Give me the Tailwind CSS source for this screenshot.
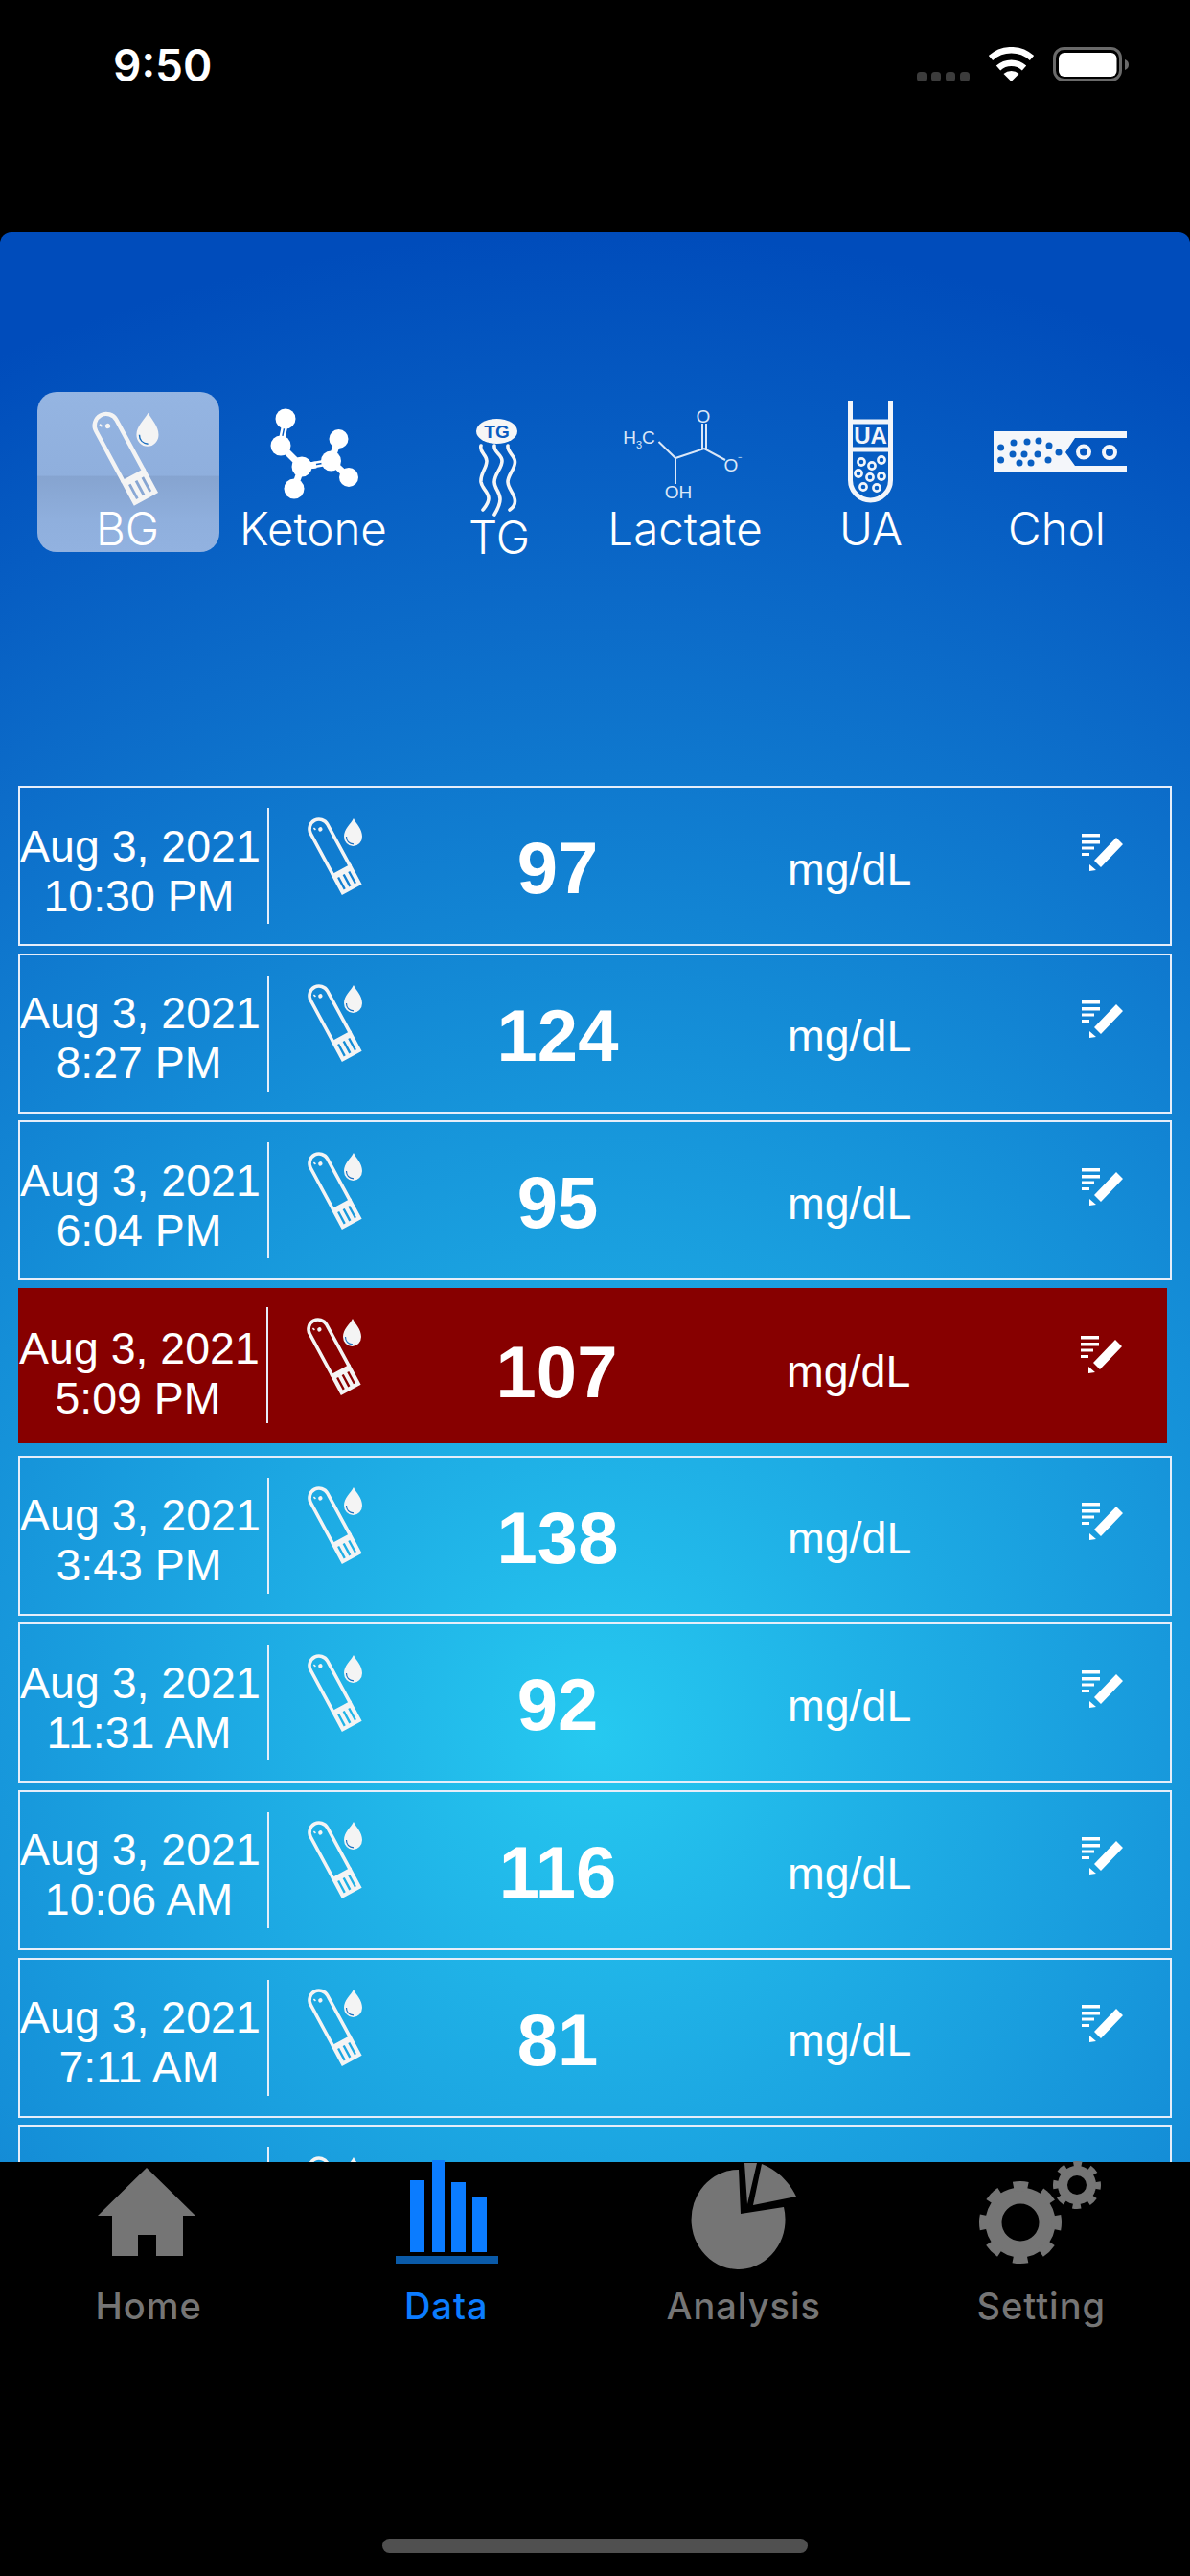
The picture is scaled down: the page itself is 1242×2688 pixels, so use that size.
<!DOCTYPE html>
<html lang="en">
<head>
    <meta charset="UTF-8">
    <meta name="viewport" content="width=device-width, initial-scale=1.0">
    <title>Data</title>
    <script src="https://cdn.jsdelivr.net/npm/@tailwindcss/browser@4"></script>
</head>
<body class="bg-black">
    <svg width="0" height="0" class="absolute">
        <defs>
            <!-- test strip with drop, used in the rows and in the BG tab -->
            <symbol id="strip" viewBox="0 0 60 84">
                <g transform="translate(13 14) rotate(-28.4)">
                    <path d="M-10 50V0A10 10 0 0 1 10 0V50" fill="none" stroke="#f4f4f4" stroke-width="3.6"/>
                    <path fill-rule="evenodd" fill="#f4f4f4" d="M-11.8 48H11.8V72H-11.8ZM-7.5 54V68H-5.2V54ZM-1.2 54V68H1.2V54ZM5.2 54V68H7.5V54Z"/>
                    <circle cx="1" cy="1" r="2.2" fill="#f4f4f4"/>
                    <path d="M-4.5 -3.5L-3.5 -1" stroke="#f4f4f4" stroke-width="1.6"/>
                </g>
                <path d="M49 3C52 9 58 14 58 22A9.5 10 0 0 1 39 22C39 14 46 9 49 3Z" fill="#f4f4f4"/>
                <path d="M41.5 22C41.5 26.500 44.500 29.500 49 29.800" fill="none" stroke="#1a6fc0" stroke-width="1.2"/>
            </symbol>
            <symbol id="edit" viewBox="1129 870 44 40">
                <path fill="#fff" d="M1129 870H1148V873.500H1129ZM1129 877H1148V880.500H1129ZM1129 883.500H1142V886.500H1129ZM1129 890H1137V893H1129Z"/>
                <path fill="#fff" d="M1165 874L1172 881L1149 905L1142 898ZM1137 902L1137 909L1144 908Z"/>
            </symbol>
        </defs>
    </svg>

    <div class="relative w-[1242px] h-[2688px] overflow-hidden bg-black font-[family-name:'Liberation_Sans'] text-white">
        <!-- status bar -->
        <header class="flex justify-between items-start h-[242px] pl-[118px] pr-[64px]">
            <span class="mt-[39px] text-[46px] leading-[58px] font-semibold font-[family-name:Inter]">9:50</span>
            <svg class="mt-[49px]" width="221" height="36" viewBox="957 49 221 36">
                <g fill="#3c3c3c">
                    <rect x="957" y="75" width="10" height="10" rx="3.500"/>
                    <rect x="972" y="75" width="10" height="10" rx="3.500"/>
                    <rect x="987" y="75" width="10" height="10" rx="3.500"/>
                    <rect x="1002" y="75" width="10" height="10" rx="3.500"/>
                </g>
                <path d="M1034 60.500A32 32 0 0 1 1077 60.500M1042 71A20 20 0 0 1 1069 71" fill="none" stroke="#fff" stroke-width="6.500"/>
                <path d="M1055.500 85L1047.500 77A12 12 0 0 1 1063.500 77Z" fill="#fff"/>
                <rect x="1100.500" y="50.500" width="69" height="33" rx="10" fill="none" stroke="#6a6a6a" stroke-width="3"/>
                <rect x="1105" y="55" width="60.500" height="25" rx="6" fill="#fff"/>
                <path d="M1174 62C1177 63 1178 65 1178 67.500C1178 70 1177 72 1174 73Z" fill="#6a6a6a"/>
            </svg>
        </header>

        <!-- blue panel -->
        <main class="h-[2014px] overflow-hidden rounded-t-[12px] bg-[radial-gradient(circle_at_621px_1568px,#26c9f0_0px,#1fb0e6_300px,#1590d8_715px,#0c6cc9_1157px,#004cbb_1568px)]">
            <!-- test type selector -->
            <nav class="grid grid-cols-[repeat(6,194px)] pl-[36px] pt-[167px] h-[578px]">
                <div class="relative flex flex-col items-center h-[167px] mt-[0px]">
                    <div class="absolute top-0 left-[3px] w-[190px] h-[167px] rounded-[20px] bg-[linear-gradient(#95b5e2,#8fafdd_52%,#86a4d0_53%,#8fafdd_80%,#92b2e0)]"></div>
                    <svg class="relative mt-[18px] ml-[-4px]" width="73" height="102"><use href="#strip"/></svg>
                    <span class="absolute top-[115px] text-[47.5px] leading-[56px] font-[family-name:Inter] font-light">BG</span>
                </div>
                <div class="relative flex flex-col items-center">
                    <svg class="overflow-visible mt-[6px]" width="194" height="125" viewBox="0 -5 194 125">
                        <g stroke="#fff" fill="none">
                            <path d="M66 20L61 44M70 20L65 44M114 60L86 65M115 64L87 69" stroke-width="2.500"/>
                            <path d="M63 45L85 67L77 90M85 67L100 65M115.500 61L123.500 38M115.500 61L134 78" stroke-width="7"/>
                        </g>
                        <g fill="#fff">
                            <circle cx="68" cy="17" r="10.500"/><circle cx="63" cy="45" r="10.500"/>
                            <circle cx="85" cy="67" r="10.500"/><circle cx="77" cy="90" r="10.500"/>
                            <circle cx="115.500" cy="61" r="10.500"/><circle cx="123.500" cy="38" r="10"/>
                            <circle cx="134" cy="78" r="10"/>
                        </g>
                    </svg>
                    <span class="absolute top-[115px] text-[47.5px] leading-[56px] font-[family-name:Inter] font-light">Ketone</span>
                </div>
                <div class="relative flex flex-col items-center">
                    <svg class="overflow-visible mt-[6px]" width="194" height="125" viewBox="0 -5 194 125">
                        <ellipse cx="94.500" cy="30" rx="21.500" ry="13" fill="#f6f6f6"/>
                        <text x="94.500" y="37" text-anchor="middle" font-size="19" font-weight="700" fill="#0a5cc0" font-family="Liberation Sans">TG</text>
                        <g fill="none" stroke="#f6f6f6" stroke-width="3.600" stroke-linecap="round">
                            <path d="M78 45C76 52 84 54 84 61C84 69 77 74 78 83C79 90 86 93 86 100C86 105 83 108 80 112"/>
                            <path d="M92 45C91 52 100 54 100 61C100 69 92 74 92 83C92 90 98 93 98 101C98 107 95 112 92 117"/>
                            <path d="M106 45C105 52 113.500 55 113.500 62C113.500 70 106 75 106 83C106 90 113.500 95 113.500 103C113.500 107 111 110 108 112"/>
                        </g>
                    </svg>
                    <span class="absolute top-[124px] text-[47.5px] leading-[56px] font-[family-name:Inter] font-light">TG</span>
                </div>
                <div class="relative flex flex-col items-center">
                    <svg class="overflow-visible mt-[6px]" width="194" height="125" viewBox="0 -5 194 125">
                        <path d="M69.500 41L87 58L117 48L139 60M87 58V85M115 48V22M119 48V22" fill="none" stroke="#dbe7f7" stroke-width="2"/>
                        <g fill="#dbe7f7" font-family="Liberation Sans" font-size="19" text-anchor="middle">
                            <text x="49" y="43">H<tspan font-size="11" dy="5">3</tspan><tspan dy="-5">C</tspan></text>
                            <text x="116" y="21">O</text>
                            <text x="147" y="72">O<tspan font-size="13" dy="-7">⁻</tspan></text>
                            <text x="90" y="100">OH</text>
                        </g>
                    </svg>
                    <span class="absolute top-[115px] text-[47.5px] leading-[56px] font-[family-name:Inter] font-light">Lactate</span>
                </div>
                <div class="relative flex flex-col items-center">
                    <svg class="overflow-visible mt-[6px]" width="194" height="125" viewBox="0 -5 194 125">
                        <path d="M75.500 -2V81A21 21 0 0 0 117.500 81V-2" fill="none" stroke="#f2f5fa" stroke-width="5"/>
                        <path d="M75 20H118M75 49H118" stroke="#f2f5fa" stroke-width="5"/>
                        <text x="96.500" y="43" text-anchor="middle" font-size="24" font-weight="700" fill="#f2f5fa" font-family="Liberation Sans">UA</text>
                        <g fill="none" stroke="#f2f5fa" stroke-width="2.600">
                            <circle cx="87" cy="62" r="3.600"/><circle cx="108" cy="60" r="3.600"/>
                            <circle cx="98" cy="66" r="3.600"/><circle cx="84" cy="74" r="3.600"/>
                            <circle cx="96" cy="78" r="3.600"/><circle cx="108" cy="77" r="3.600"/>
                            <circle cx="89" cy="88" r="3.600"/><circle cx="103" cy="89" r="3.600"/>
                        </g>
                    </svg>
                    <span class="absolute top-[115px] text-[47.5px] leading-[56px] font-[family-name:Inter] font-light">UA</span>
                </div>
                <div class="relative flex flex-col items-center">
                    <svg class="overflow-visible mt-[6px]" width="194" height="125" viewBox="0 -5 194 125">
                        <path d="M31 30H170V37H116L106 52L116 66H170V73H31Z" fill="#f4f6fa"/>
                        <g fill="#0a5fc2">
                            <circle cx="52" cy="42" r="3.500"/><circle cx="66" cy="41" r="3.500"/><circle cx="78" cy="40" r="3.500"/><circle cx="89" cy="45" r="3.500"/>
                            <circle cx="38.600" cy="47" r="3.500"/><circle cx="51" cy="54" r="3.500"/><circle cx="63" cy="54" r="3.500"/><circle cx="77" cy="54" r="3.500"/><circle cx="99" cy="52" r="3.500"/>
                            <circle cx="38.600" cy="60" r="3.500"/><circle cx="58" cy="63" r="3.500"/><circle cx="70" cy="63" r="3.500"/><circle cx="88" cy="60" r="3.500"/>
                        </g>
                        <g fill="none" stroke="#f4f6fa" stroke-width="4">
                            <circle cx="125" cy="51.500" r="6"/><circle cx="152" cy="52" r="6"/>
                        </g>
                    </svg>
                    <span class="absolute top-[115px] text-[47.5px] leading-[56px] font-[family-name:Inter] font-light">Chol</span>
                </div>
            </nav>

            <!-- result rows, filled in below -->
            <section id="rows" class="flex flex-col gap-[7.67px] ml-[19px] w-[1204px]"></section>
        </main>

        <!-- tab bar -->
        <nav class="grid grid-cols-4 h-[432px] bg-black text-[38px] font-medium font-[family-name:Inter] tracking-[1px]">
            <div class="flex flex-col items-center text-[#757575]">
                <svg class="overflow-visible blur-[0.6px]" width="310" height="106" viewBox="0 2256 310 106">
                    <path fill="#757575" d="M153 2262L204 2312L191 2312V2354H163V2332H144V2354H117V2312L102 2312Z"/>
                </svg>
                <span class="mt-[22px] leading-[44px]">Home</span>
            </div>
            <div class="flex flex-col items-center text-[#0b7cff]">
                <svg class="overflow-visible blur-[0.6px]" width="310" height="106" viewBox="310 2256 310 106">
                    <path fill="#0b7cff" d="M427 2275H442V2350H427ZM450 2254H463V2350H450ZM470 2277H485V2350H470ZM492 2293H507V2350H492Z"/>
                    <rect x="412" y="2354" width="107" height="8" fill="#0a5aa8"/>
                </svg>
                <span class="mt-[22px] leading-[44px]">Data</span>
            </div>
            <div class="flex flex-col items-center text-[#757575]">
                <svg class="overflow-visible blur-[0.6px]" width="310" height="106" viewBox="621 2256 310 106">
                    <path fill="#757575" d="M771 2264L773 2310L818 2303A49 52 0 1 1 771 2264Z"/>
                    <path fill="#757575" d="M777 2257H790L780 2300ZM795 2258C811 2264 824 2277 831 2292L786 2301Z"/>
                </svg>
                <span class="mt-[22px] leading-[44px]">Analysis</span>
            </div>
            <div class="flex flex-col items-center text-[#757575]">
                <svg class="overflow-visible blur-[0.6px]" width="310" height="106" viewBox="931 2256 310 106">
                    <circle cx="1064" cy="2319" r="28" fill="none" stroke="#757575" stroke-width="17"/>
                    <circle cx="1064" cy="2319" r="38" fill="none" stroke="#757575" stroke-width="10" stroke-dasharray="14.920 14.920" stroke-dashoffset="7.460"/>
                    <circle cx="1123" cy="2280" r="15" fill="none" stroke="#757575" stroke-width="10"/>
                    <circle cx="1123" cy="2280" r="22" fill="none" stroke="#757575" stroke-width="6" stroke-dasharray="8.640 8.640" stroke-dashoffset="4.320"/>
                </svg>
                <span class="mt-[22px] leading-[44px]">Setting</span>
            </div>
        </nav>

        <!-- home indicator, sits over the tab bar -->
        <div class="absolute left-[399px] top-[2649px] w-[444px] h-[15px] rounded-full bg-[#505050]"></div>
    </div>

    <script>
        const rows = [
            { time: '10:30 PM', value: 97 },
            { time: '8:27 PM', value: 124 },
            { time: '6:04 PM', value: 95 },
            { time: '5:09 PM', value: 107, high: true },
            { time: '3:43 PM', value: 138 },
            { time: '11:31 AM', value: 92 },
            { time: '10:06 AM', value: 116 },
            { time: '7:11 AM', value: 81 },
            { time: '', value: '' },
        ];

        document.getElementById('rows').innerHTML = rows.map(row => `
            <div class="flex items-center shrink-0 ${row.high ? 'h-[162px] mb-[5px] w-[1199px] pl-[1px] bg-[#870000]' : 'h-[167px] border-2 border-[#e6eefa]'}">
                <div class="w-[248px] ${row.high ? 'mt-[17px]' : 'mt-[10px]'} text-center text-[46.5px] leading-[52px] whitespace-nowrap">${row.time ? 'Aug 3, 2021<br>' + row.time : ''}</div>
                <div class="ml-[10px] w-[2px] h-[121px] bg-[#e6eefa]"></div>
                <svg class="ml-[39px] ${row.high ? 'mt-[-20px]' : 'mt-[-22px]'} shrink-0" width="60" height="84"><use href="#strip"/></svg>
                <div class="w-[404px] ${row.high ? 'mt-[15px]' : 'mt-[5px]'} text-center text-[76px] font-bold">${row.value}</div>
                <div class="ml-[38px] ${row.high ? 'mt-[13px]' : 'mt-[8px]'} w-[307px] text-[46.5px]">${row.value ? 'mg/dL' : ''}</div>
                <svg class="${row.high ? 'mt-[-22px]' : 'mt-[-28px]'} shrink-0" width="44" height="40"><use href="#edit"/></svg>
            </div>
        `).join('');
    </script>
</body>
</html>
